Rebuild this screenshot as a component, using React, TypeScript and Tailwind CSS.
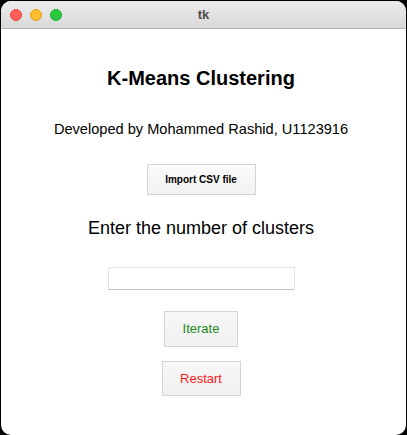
import React from 'react';

const font = { fontFamily: '"Liberation Sans", Arial, sans-serif' };

const TrafficLights = () => (
  <div className="absolute left-[9px] top-[8px] flex gap-[8px]">
    <span className="block h-[12px] w-[12px] rounded-full bg-[#fe5f57] border border-[#e2463f]" />
    <span className="block h-[12px] w-[12px] rounded-full bg-[#febc2e] border border-[#e1a116]" />
    <span className="block h-[12px] w-[12px] rounded-full bg-[#28c840] border border-[#1aab29]" />
  </div>
);

const App = () => (
  <div className="h-[435px] w-[407px] bg-black p-[1px] pb-0" style={font}>
    <div className="flex h-[434px] w-[405px] flex-col overflow-hidden rounded-[10px] bg-white">
      {/* title bar */}
      <div className="relative flex h-[28px] shrink-0 items-center justify-center border-b border-[#b5b5b5] bg-gradient-to-b from-[#ececec] to-[#d9d9d9]">
        <TrafficLights />
        <span className="text-[13px] font-bold text-[#4d4d4d]">tk</span>
      </div>

      <div className="flex flex-col items-center pr-[5px]">
        <h1 className="mt-[37px] text-[20px] font-bold leading-[24px] text-black">K-Means Clustering</h1>
        <p className="mt-[29px] text-[14.6px] leading-[20px] text-black">Developed by Mohammed Rashid, U1123916</p>
        <button className="mt-[25px] h-[31px] w-[109px] border border-[#d4d4d4] bg-gradient-to-b from-[#fbfbfb] to-[#f1f1f1] text-[10px] font-bold text-black">
          Import CSV file
        </button>
        <p className="mt-[22px] text-[18px] leading-[22px] text-black">Enter the number of clusters</p>
        <input
          className="mt-[28px] h-[23px] w-[187px] border border-[#e3e3e3] border-b-[#c4c4c4] bg-white outline-none"
          type="text"
        />
        <button className="mt-[21px] h-[36px] w-[74px] border border-[#d4d4d4] bg-gradient-to-b from-[#f7f7f7] to-[#f1f1f1] text-[13px] text-[#1b8a1b]">
          Iterate
        </button>
        <button className="mt-[14px] h-[35px] w-[79px] border border-[#d4d4d4] bg-gradient-to-b from-[#f7f7f7] to-[#f1f1f1] text-[13px] text-[#ff1a1a]">
          Restart
        </button>
      </div>
    </div>
  </div>
);

export default App;
